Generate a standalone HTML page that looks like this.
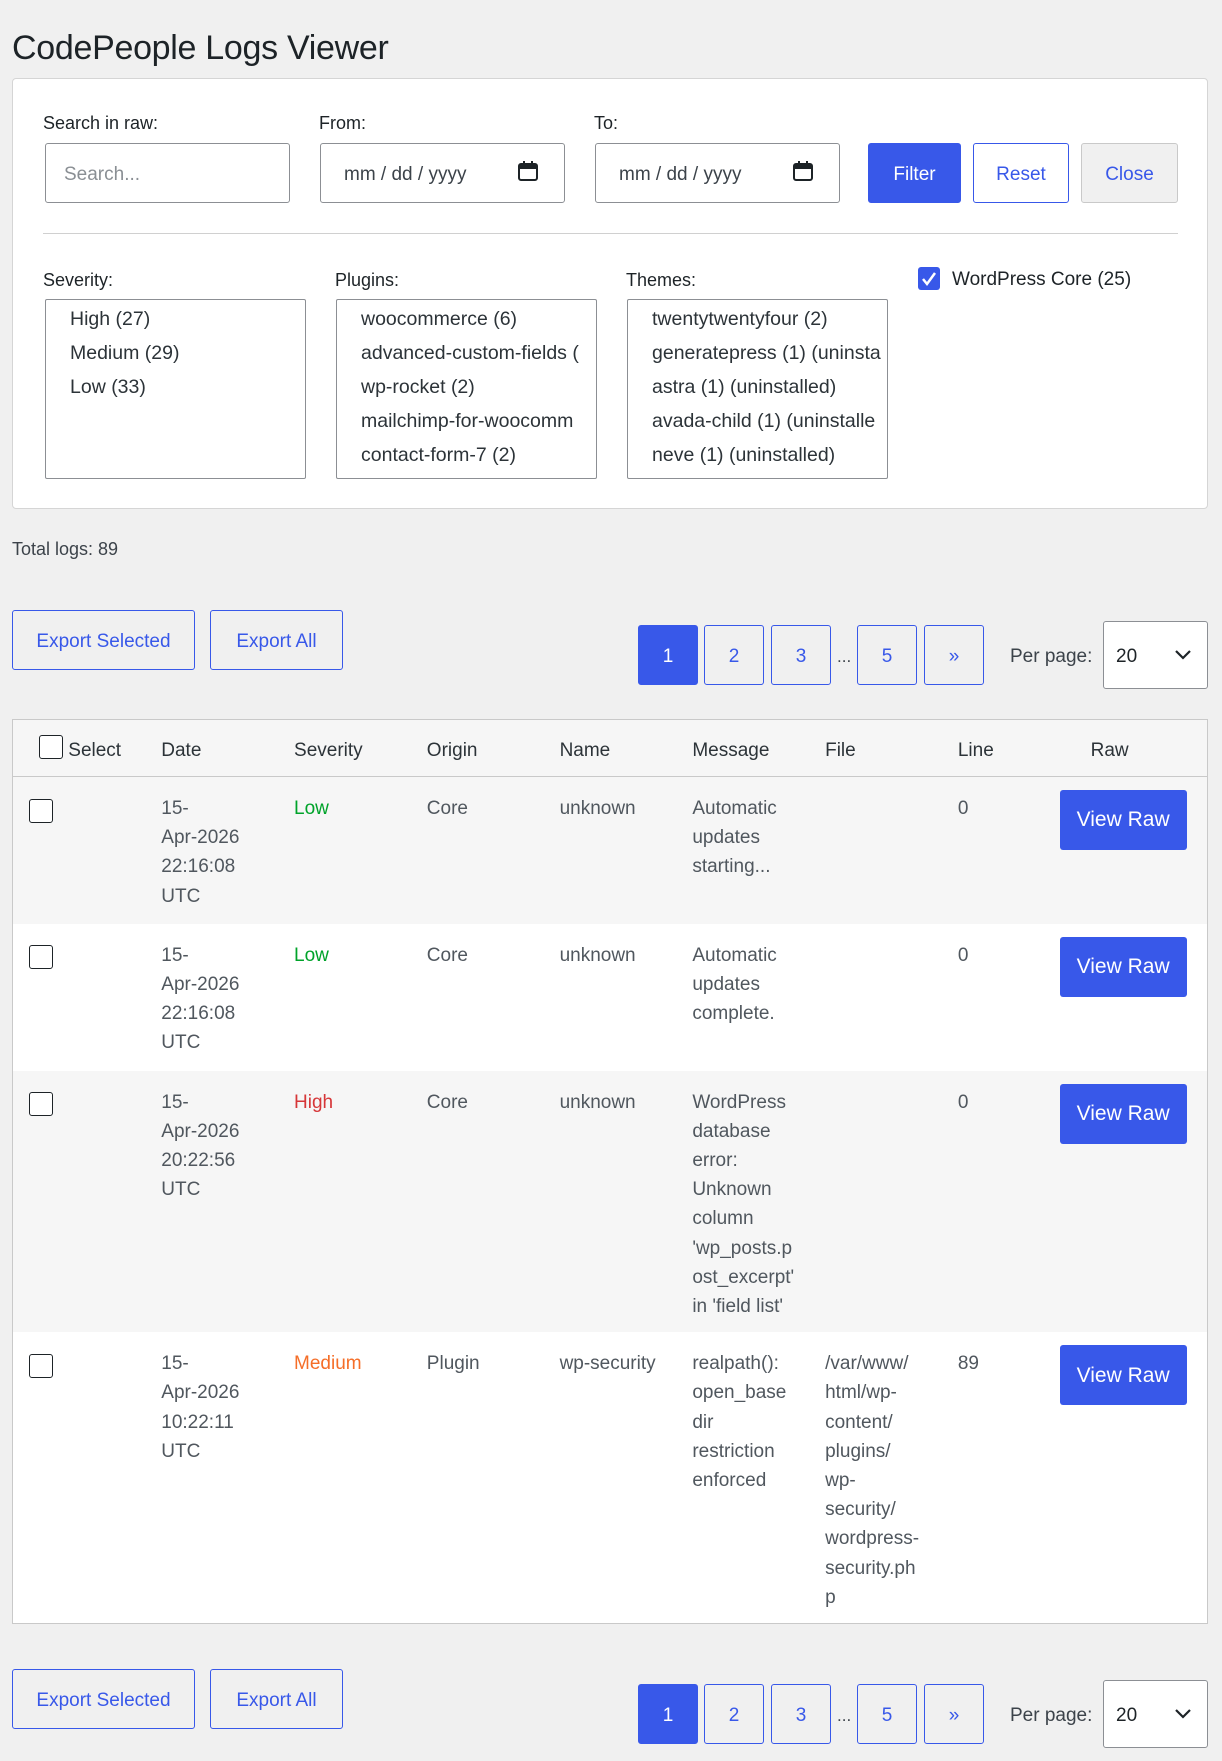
<!DOCTYPE html>
<html><head><meta charset="utf-8"><style>
*{box-sizing:border-box;margin:0;padding:0}
body{width:1222px;height:1761px;background:#f0f0f0;font-family:"Liberation Sans",sans-serif;color:#3c434a;position:relative;overflow:hidden;font-size:19px}
.a{position:absolute}
h1{position:absolute;left:12px;top:29px;font-weight:400;font-size:34px;color:#1d2327;letter-spacing:-0.3px}
.panel{left:12px;top:78px;width:1196px;height:431px;background:#fff;border:1px solid #d5d5d5;border-radius:4px}
.lbl{font-size:18px;color:#1d2327}
.inp{background:#fff;border:1px solid #8c8f94;border-radius:3px;height:60px;font-size:19px;display:flex;align-items:center;padding-left:18px;padding-top:4px}
.btn{display:flex;align-items:center;justify-content:center;border-radius:3px;font-size:19px;color:#3858e9;border:1px solid #3858e9;background:transparent;padding-top:3px}
.bf{background:#3858e9;color:#fff}
.list{border:1px solid #8c8f94;border-radius:2px;background:#fff;overflow:hidden;white-space:nowrap;padding:2px 0 0 24px;font-size:19.5px;line-height:34px;color:#2c3338}
.pg{width:60px;height:60px;font-size:19px}
table{position:absolute;left:12px;top:719px;width:1196px;border-collapse:collapse;table-layout:fixed;background:#fff;border:1px solid #c9c9c9}
th{font-weight:400;text-align:left;height:57px;padding:5px 0 0 16px;background:#f6f6f6;border-bottom:1px solid #c9c9c9;font-size:19px;color:#2c3338}
td{vertical-align:top;padding:17px 0 11px 16px;line-height:29.2px;font-size:19px;color:#50575e}
tr.s td{background:#f6f6f6}
.cb{display:inline-block;width:24px;height:24px;border:1.5px solid #1d2327;border-radius:3px;background:#fff;vertical-align:middle}
.vr{background:#3858e9;color:#fff;width:127px;height:60px;border-radius:3px;display:flex;align-items:center;justify-content:center;font-size:21px;margin-left:-31px;margin-top:-4px}
.low{color:#00a32a}.high{color:#d63638}.med{color:#f56e28}
.sel{background:#fff;border:1px solid #8c8f94;border-radius:3px;height:68px;width:105px;font-size:19px;color:#1d2327;padding-left:12px;padding-top:3px;display:flex;align-items:center}
</style></head><body>
<h1>CodePeople Logs Viewer</h1>
<div class="a panel"></div>
<div class="a lbl" style="left:43px;top:113px">Search in raw:</div>
<div class="a lbl" style="left:319px;top:113px">From:</div>
<div class="a lbl" style="left:594px;top:113px">To:</div>
<div class="a inp" style="left:45px;top:143px;width:245px;color:#8a8f94">Search...</div>
<div class="a inp" style="left:320px;top:143px;width:245px;padding-left:23px">mm / dd / yyyy
<svg style="position:absolute;left:196px;top:16px" width="22" height="22" viewBox="0 0 22 22"><rect x="2" y="4" width="18" height="16" rx="2" fill="none" stroke="#1d2327" stroke-width="2"/><rect x="2" y="4" width="18" height="5" fill="#1d2327"/><rect x="6" y="1" width="2" height="5" fill="#1d2327"/><rect x="14" y="1" width="2" height="5" fill="#1d2327"/></svg></div>
<div class="a inp" style="left:595px;top:143px;width:245px;padding-left:23px">mm / dd / yyyy
<svg style="position:absolute;left:196px;top:16px" width="22" height="22" viewBox="0 0 22 22"><rect x="2" y="4" width="18" height="16" rx="2" fill="none" stroke="#1d2327" stroke-width="2"/><rect x="2" y="4" width="18" height="5" fill="#1d2327"/><rect x="6" y="1" width="2" height="5" fill="#1d2327"/><rect x="14" y="1" width="2" height="5" fill="#1d2327"/></svg></div>
<div class="a btn bf" style="left:868px;top:143px;width:93px;height:60px">Filter</div>
<div class="a btn" style="left:973px;top:143px;width:96px;height:60px">Reset</div>
<div class="a btn" style="left:1081px;top:143px;width:97px;height:60px;background:#f0f0f0;border-color:#c9c9c9">Close</div>
<div class="a" style="left:43px;top:233px;width:1135px;height:1px;background:#d0d0d0"></div>
<div class="a lbl" style="left:43px;top:270px">Severity:</div>
<div class="a lbl" style="left:335px;top:270px">Plugins:</div>
<div class="a lbl" style="left:626px;top:270px">Themes:</div>
<div class="a" style="left:918px;top:267px;width:22px;height:23px;background:#3858e9;border-radius:3px"><svg width="22" height="23" viewBox="0 0 22 23"><path d="M5 12l4 5 8-11" fill="none" stroke="#fff" stroke-width="2.5"/></svg></div>
<div class="a lbl" style="left:952px;top:269px;font-size:19px">WordPress Core (25)</div>
<div class="a list" style="left:45px;top:299px;width:261px;height:180px">High (27)<br>Medium (29)<br>Low (33)</div>
<div class="a list" style="left:336px;top:299px;width:261px;height:180px">woocommerce (6)<br>advanced-custom-fields (<br>wp-rocket (2)<br>mailchimp-for-woocomm<br>contact-form-7 (2)</div>
<div class="a list" style="left:627px;top:299px;width:261px;height:180px">twentytwentyfour (2)<br>generatepress (1) (uninsta<br>astra (1) (uninstalled)<br>avada-child (1) (uninstalle<br>neve (1) (uninstalled)</div>
<div class="a" style="left:12px;top:539px;font-size:18px">Total logs: 89</div>

<div class="a btn" style="left:12px;top:610px;width:183px;height:60px">Export Selected</div>
<div class="a btn" style="left:210px;top:610px;width:133px;height:60px">Export All</div>
<div class="a btn bf pg" style="left:638px;top:625px">1</div>
<div class="a btn pg" style="left:704px;top:625px">2</div>
<div class="a btn pg" style="left:771px;top:625px">3</div>
<div class="a" style="left:837px;top:647px;font-size:17px">...</div>
<div class="a btn pg" style="left:857px;top:625px">5</div>
<div class="a btn pg" style="left:924px;top:625px">»</div>
<div class="a" style="left:1010px;top:646px;font-size:19px">Per page:</div>
<div class="a sel" style="left:1103px;top:621px">20<svg style="position:absolute;right:16px;top:28px" width="16" height="10" viewBox="0 0 16 10"><path d="M1 1l7 7 7-7" fill="none" stroke="#1d2327" stroke-width="2.2"/></svg></div>

<table>
<tr><th style="padding-left:26px"><span class="cb" style="margin-top:-6px"></span> Select</th><th>Date</th><th>Severity</th><th>Origin</th><th>Name</th><th>Message</th><th>File</th><th>Line</th><th>Raw</th></tr>
<tr class="s" style="height:147px"><td><span class="cb" style="margin-top:4px"></span></td><td>15-<br>Apr-2026<br>22:16:08<br>UTC</td><td class="low">Low</td><td>Core</td><td>unknown</td><td>Automatic<br>updates<br>starting...</td><td></td><td>0</td><td><div class="vr">View Raw</div></td></tr>
<tr style="height:147px"><td><span class="cb" style="margin-top:4px"></span></td><td>15-<br>Apr-2026<br>22:16:08<br>UTC</td><td class="low">Low</td><td>Core</td><td>unknown</td><td>Automatic<br>updates<br>complete.</td><td></td><td>0</td><td><div class="vr">View Raw</div></td></tr>
<tr class="s" style="height:259px"><td><span class="cb" style="margin-top:4px"></span></td><td>15-<br>Apr-2026<br>20:22:56<br>UTC</td><td class="high">High</td><td>Core</td><td>unknown</td><td style="white-space:nowrap">WordPress<br>database<br>error:<br>Unknown<br>column<br>'wp_posts.p<br>ost_excerpt'<br>in 'field list'</td><td></td><td>0</td><td><div class="vr">View Raw</div></td></tr>
<tr style="height:290px"><td><span class="cb" style="margin-top:4px"></span></td><td>15-<br>Apr-2026<br>10:22:11<br>UTC</td><td class="med">Medium</td><td>Plugin</td><td style="white-space:nowrap">wp-security</td><td style="white-space:nowrap">realpath():<br>open_base<br>dir<br>restriction<br>enforced</td><td style="white-space:nowrap">/var/www/<br>html/wp-<br>content/<br>plugins/<br>wp-<br>security/<br>wordpress-<br>security.ph<br>p</td><td>89</td><td><div class="vr">View Raw</div></td></tr>
</table>

<div class="a btn" style="left:12px;top:1669px;width:183px;height:60px">Export Selected</div>
<div class="a btn" style="left:210px;top:1669px;width:133px;height:60px">Export All</div>
<div class="a btn bf pg" style="left:638px;top:1684px">1</div>
<div class="a btn pg" style="left:704px;top:1684px">2</div>
<div class="a btn pg" style="left:771px;top:1684px">3</div>
<div class="a" style="left:837px;top:1706px;font-size:17px">...</div>
<div class="a btn pg" style="left:857px;top:1684px">5</div>
<div class="a btn pg" style="left:924px;top:1684px">»</div>
<div class="a" style="left:1010px;top:1705px;font-size:19px">Per page:</div>
<div class="a sel" style="left:1103px;top:1680px">20<svg style="position:absolute;right:16px;top:28px" width="16" height="10" viewBox="0 0 16 10"><path d="M1 1l7 7 7-7" fill="none" stroke="#1d2327" stroke-width="2.2"/></svg></div>
</body></html>
